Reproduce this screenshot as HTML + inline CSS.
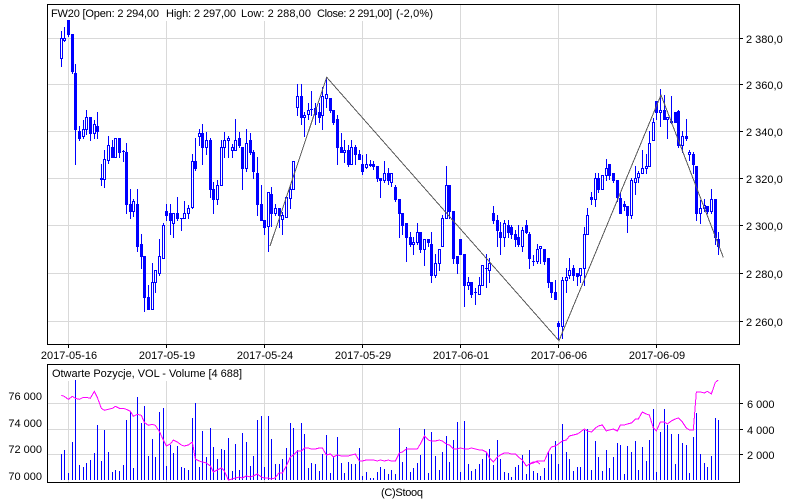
<!DOCTYPE html>
<html><head><meta charset="utf-8"><style>
html,body{margin:0;padding:0;background:#fff}
svg{display:block}
text{font-family:"Liberation Sans",Arial,sans-serif;font-size:11px;fill:#000;white-space:pre}
</style></head><body>
<svg width="800" height="500" viewBox="0 0 800 500" xmlns="http://www.w3.org/2000/svg">
<rect width="800" height="500" fill="#fff"/>
<g shape-rendering="crispEdges">
<path fill="none" stroke="#d9d9d9" d="M48 38.5H739M48 84.5H739M48 131.5H739M48 178.5H739M48 225.5H739M48 273.5H739M48 321.5H739M68.5 5V344M166.5 5V344M264.5 5V344M362.5 5V344M460.5 5V344M558.5 5V344M656.5 5V344"/>
<path fill="none" stroke="#d9d9d9" d="M48 403.5H739M48 429.5H739M48 454.5H739M68.5 365V482M166.5 365V482M264.5 365V482M362.5 365V482M460.5 365V482M558.5 365V482M656.5 365V482"/>
<rect x="48" y="5" width="388" height="16" fill="#fff"/>
<rect x="48" y="365" width="197" height="16" fill="#fff"/>
<path fill="none" stroke="#000" d="M47.5 4.5H739.5V344.5H47.5ZM47.5 364.5H739.5V482.5H47.5ZM68.5 345V348M166.5 345V348M264.5 345V348M362.5 345V348M460.5 345V348M558.5 345V348M656.5 345V348M740 38.5H743M740 84.5H743M740 131.5H743M740 178.5H743M740 225.5H743M740 273.5H743M740 321.5H743M740 403.5H743M740 429.5H743M740 454.5H743"/>
<!-- wicks -->
<path fill="none" stroke="#0000ff" d="M61.5 31V67M64.5 27V42M68.5 20V37M72.5 34V74M75.5 64V165M79.5 126V141M83.5 120V139M86.5 110V135M90.5 117V141M94.5 120V139M97.5 112V139M101.5 164V186M104.5 150V188M108.5 136V164M112.5 140V158M115.5 138V158M119.5 138V158M123.5 150V162M126.5 143V214M130.5 189V219M133.5 199V217M137.5 189V252M141.5 234V269M144.5 256V312M148.5 285V310M152.5 263V310M155.5 270V293M159.5 239V276M163.5 223V259M166.5 204V221M170.5 204V235M173.5 213V238M177.5 197V221M181.5 218V231M184.5 201V219M188.5 205V219M192.5 154V209M195.5 138V171M199.5 129V146M202.5 124V165M206.5 132V155M210.5 138V198M213.5 182V214M217.5 180V205M221.5 140V186M224.5 132V158M228.5 136V158M232.5 144V158M235.5 119V151M239.5 132V148M242.5 147V190M246.5 129V172M250.5 133V155M253.5 150V179M257.5 157V216M261.5 185V221M264.5 220V235M268.5 192V252M271.5 187V227M275.5 204V216M279.5 208V228M282.5 212V235M286.5 196V218M290.5 185V209M293.5 161V190M297.5 84V116M301.5 84V125M304.5 112V137M308.5 103V120M311.5 91V116M315.5 103V125M319.5 103V123M322.5 87V130M326.5 77V108M330.5 98V113M333.5 110V125M337.5 115V165M341.5 133V153M344.5 140V163M348.5 145V167M351.5 140V165M355.5 145V165M359.5 150V160M362.5 155V175M366.5 154V169M370.5 160V167M373.5 161V170M377.5 166V182M380.5 178V198M384.5 161V183M388.5 168V185M391.5 173V187M395.5 185V202M399.5 199V238M402.5 213V235M406.5 223V262M410.5 232V247M413.5 237V255M417.5 223V245M420.5 232V253M424.5 239V266M428.5 239V247M431.5 232V283M435.5 254V278M439.5 249V271M442.5 215V247M446.5 166V219M449.5 185V219M453.5 211V264M457.5 256V274M460.5 239V255M464.5 254V307M468.5 277V290M471.5 282V298M475.5 288V305M479.5 277V295M482.5 265V286M486.5 254V288M489.5 258V283M493.5 206V224M497.5 215V247M500.5 222V255M504.5 220V247M508.5 220V238M511.5 225V239M515.5 230V247M518.5 225V247M522.5 227V252M526.5 220V234M529.5 232V269M533.5 255V266M537.5 244V264M540.5 246V264M544.5 249V265M548.5 258V288M551.5 282V298M555.5 280V300M558.5 321V340M562.5 277V339M566.5 268V293M569.5 258V279M573.5 265V281M577.5 273V286M580.5 268V283M584.5 227V286M587.5 208V235M591.5 192V205M595.5 173V207M598.5 173V193M602.5 175V190M606.5 159V181M609.5 164V180M613.5 173V183M617.5 180V202M620.5 192V214M624.5 201V211M627.5 206V233M631.5 178V219M635.5 166V195M638.5 171V183M642.5 150V174M646.5 154V174M649.5 131V167M653.5 118V141M656.5 101V120M660.5 89V127M664.5 95V120M667.5 117V139M671.5 96V124M675.5 112V123M678.5 110V148M682.5 131V153M686.5 119V141M689.5 150V161M693.5 152V174M696.5 166V221M700.5 200V224M704.5 199V212M707.5 206V214M711.5 189V214M715.5 199V245M718.5 232V255"/>
<!-- filled -->
<path fill="#0000ff" d="M67 20h3V35h-3zM71 34h3V72h-3zM74 73h3V130h-3zM78 131h3V139h-3zM89 117h3V134h-3zM96 126h3V132h-3zM100 178h3V180h-3zM111 147h3V158h-3zM118 138h3V153h-3zM122 151h3V152h-3zM125 152h3V205h-3zM129 204h3V212h-3zM136 204h3V247h-3zM140 244h3V257h-3zM143 256h3V298h-3zM147 297h3V310h-3zM165 211h3V216h-3zM169 213h3V221h-3zM176 213h3V219h-3zM180 218h3V219h-3zM194 161h3V169h-3zM201 133h3V148h-3zM209 140h3V190h-3zM212 189h3V200h-3zM238 138h3V146h-3zM241 147h3V169h-3zM249 140h3V153h-3zM252 152h3V172h-3zM256 173h3V205h-3zM260 204h3V221h-3zM263 220h3V228h-3zM270 194h3V214h-3zM278 208h3V216h-3zM300 96h3V118h-3zM310 109h3V110h-3zM314 108h3V115h-3zM318 112h3V118h-3zM329 98h3V111h-3zM332 110h3V123h-3zM336 119h3V148h-3zM340 147h3V153h-3zM347 150h3V165h-3zM354 147h3V155h-3zM358 154h3V160h-3zM361 164h3V172h-3zM369 164h3V166h-3zM372 164h3V167h-3zM376 166h3V179h-3zM379 178h3V181h-3zM387 173h3V181h-3zM394 187h3V200h-3zM398 199h3V214h-3zM401 213h3V226h-3zM405 223h3V238h-3zM409 237h3V245h-3zM419 232h3V250h-3zM427 239h3V243h-3zM430 244h3V276h-3zM448 185h3V212h-3zM452 211h3V259h-3zM456 256h3V264h-3zM459 239h3V255h-3zM463 254h3V286h-3zM470 282h3V295h-3zM474 292h3V293h-3zM485 268h3V269h-3zM492 213h3V221h-3zM496 220h3V231h-3zM499 232h3V238h-3zM507 225h3V233h-3zM510 227h3V235h-3zM514 234h3V240h-3zM517 237h3V245h-3zM525 225h3V233h-3zM528 234h3V259h-3zM532 261h3V262h-3zM543 249h3V262h-3zM547 258h3V283h-3zM550 282h3V293h-3zM554 292h3V300h-3zM557 323h3V327h-3zM572 268h3V276h-3zM576 273h3V277h-3zM590 197h3V200h-3zM597 178h3V190h-3zM608 164h3V176h-3zM612 173h3V181h-3zM616 180h3V198h-3zM619 198h3V214h-3zM623 204h3V207h-3zM626 206h3V216h-3zM655 101h3V113h-3zM663 110h3V120h-3zM674 112h3V123h-3zM677 111h3V146h-3zM685 136h3V139h-3zM692 154h3V165h-3zM695 166h3V214h-3zM706 206h3V212h-3zM714 199h3V238h-3zM717 239h3V247h-3z"/>
<!-- hollow -->
<path fill="#fff" stroke="#0000ff" d="M60.5 38.5h2V58.5h-2zM63.5 38.5h2V40.5h-2zM82.5 129.5h2V136.5h-2zM85.5 117.5h2V129.5h-2zM93.5 124.5h2V133.5h-2zM103.5 159.5h2V179.5h-2zM107.5 145.5h2V160.5h-2zM114.5 138.5h2V157.5h-2zM132.5 201.5h2V211.5h-2zM151.5 282.5h2V309.5h-2zM154.5 270.5h2V282.5h-2zM158.5 256.5h2V273.5h-2zM162.5 225.5h2V258.5h-2zM172.5 213.5h2V223.5h-2zM183.5 213.5h2V218.5h-2zM187.5 208.5h2V213.5h-2zM191.5 161.5h2V207.5h-2zM198.5 133.5h2V136.5h-2zM205.5 140.5h2V147.5h-2zM216.5 185.5h2V199.5h-2zM220.5 147.5h2V185.5h-2zM223.5 140.5h2V147.5h-2zM227.5 138.5h2V140.5h-2zM231.5 147.5h2V150.5h-2zM234.5 140.5h2V150.5h-2zM245.5 143.5h2V168.5h-2zM267.5 192.5h2V226.5h-2zM274.5 208.5h2V213.5h-2zM281.5 215.5h2V219.5h-2zM285.5 197.5h2V217.5h-2zM289.5 189.5h2V198.5h-2zM292.5 161.5h2V189.5h-2zM296.5 96.5h2V107.5h-2zM303.5 115.5h2V117.5h-2zM307.5 110.5h2V114.5h-2zM321.5 96.5h2V115.5h-2zM325.5 94.5h2V98.5h-2zM343.5 150.5h2V152.5h-2zM350.5 147.5h2V164.5h-2zM365.5 164.5h2V167.5h-2zM383.5 173.5h2V180.5h-2zM390.5 173.5h2V182.5h-2zM412.5 242.5h2V244.5h-2zM416.5 232.5h2V242.5h-2zM423.5 239.5h2V249.5h-2zM434.5 263.5h2V275.5h-2zM438.5 249.5h2V263.5h-2zM441.5 218.5h2V246.5h-2zM445.5 185.5h2V218.5h-2zM467.5 282.5h2V285.5h-2zM478.5 285.5h2V294.5h-2zM481.5 265.5h2V285.5h-2zM488.5 263.5h2V270.5h-2zM503.5 223.5h2V237.5h-2zM521.5 230.5h2V246.5h-2zM536.5 249.5h2V261.5h-2zM539.5 246.5h2V248.5h-2zM561.5 280.5h2V326.5h-2zM565.5 277.5h2V280.5h-2zM568.5 270.5h2V275.5h-2zM579.5 268.5h2V275.5h-2zM583.5 234.5h2V268.5h-2zM586.5 215.5h2V234.5h-2zM594.5 178.5h2V199.5h-2zM601.5 175.5h2V189.5h-2zM605.5 168.5h2V175.5h-2zM630.5 180.5h2V215.5h-2zM634.5 178.5h2V182.5h-2zM637.5 173.5h2V177.5h-2zM641.5 168.5h2V173.5h-2zM645.5 166.5h2V168.5h-2zM648.5 143.5h2V166.5h-2zM652.5 122.5h2V140.5h-2zM659.5 110.5h2V112.5h-2zM666.5 117.5h2V119.5h-2zM670.5 121.5h2V122.5h-2zM681.5 136.5h2V145.5h-2zM688.5 152.5h2V154.5h-2zM699.5 208.5h2V213.5h-2zM703.5 205.5h2V208.5h-2zM710.5 199.5h2V211.5h-2z"/>
<!-- volume -->
<path fill="none" stroke="#0000ff" d="M61.5 454V480M64.5 450V480M68.5 473V480M72.5 442V480M75.5 380V480M79.5 465V480M83.5 467V480M86.5 463V480M90.5 460V480M94.5 453V480M97.5 425V480M101.5 461V480M104.5 430V480M108.5 452V480M112.5 472V480M115.5 470V480M119.5 471V480M123.5 465V480M126.5 420V480M130.5 412V480M133.5 468V480M137.5 397V480M141.5 423V480M144.5 406V480M148.5 456V480M152.5 439V480M155.5 457V480M159.5 412V480M163.5 408V480M166.5 466V480M170.5 445V480M173.5 453V480M177.5 446V480M181.5 467V480M184.5 468V480M188.5 470V480M192.5 418V480M195.5 403V480M199.5 467V480M202.5 431V480M206.5 457V480M210.5 428V480M213.5 447V480M217.5 459V480M221.5 449V480M224.5 450V480M228.5 438V480M232.5 471V480M235.5 444V480M239.5 470V480M242.5 433V480M246.5 442V480M250.5 466V480M253.5 456V480M257.5 420V480M261.5 416V480M264.5 467V480M268.5 416V480M271.5 439V480M275.5 464V480M279.5 464V480M282.5 459V480M286.5 448V480M290.5 423V480M293.5 428V480M297.5 450V480M301.5 423V480M304.5 434V480M308.5 468V480M311.5 463V480M315.5 464V480M319.5 471V480M322.5 454V480M326.5 435V480M330.5 473V480M333.5 457V480M337.5 437V480M341.5 463V480M344.5 473V480M348.5 462V480M351.5 464V480M355.5 464V480M359.5 448V480M362.5 476V480M366.5 472V480M370.5 478V480M373.5 478V480M377.5 472V480M380.5 467V480M384.5 469V480M388.5 474V480M391.5 470V480M395.5 474V480M399.5 428V480M402.5 462V480M406.5 447V480M410.5 472V480M413.5 468V480M417.5 463V480M420.5 455V480M424.5 429V480M428.5 473V480M431.5 432V480M435.5 456V480M439.5 470V480M442.5 452V480M446.5 436V480M449.5 462V480M453.5 440V480M457.5 422V480M460.5 472V480M464.5 421V480M468.5 464V480M471.5 471V480M475.5 469V480M479.5 464V480M482.5 459V480M486.5 452V480M489.5 449V480M493.5 465V480M497.5 440V480M500.5 459V480M504.5 472V480M508.5 473V480M511.5 477V480M515.5 467V480M518.5 465V480M522.5 455V480M526.5 474V480M529.5 450V480M533.5 471V480M537.5 473V480M540.5 476V480M544.5 468V480M548.5 451V480M551.5 454V480M555.5 441V480M558.5 464V480M562.5 424V480M566.5 452V480M569.5 459V480M573.5 471V480M577.5 467V480M580.5 467V480M584.5 430V480M587.5 429V480M591.5 470V480M595.5 441V480M598.5 457V480M602.5 471V480M606.5 450V480M609.5 468V480M613.5 457V480M617.5 443V480M620.5 445V480M624.5 474V480M627.5 446V480M631.5 452V480M635.5 441V480M638.5 470V480M642.5 447V480M646.5 461V480M649.5 440V480M653.5 409V480M656.5 472V480M660.5 432V480M664.5 409V480M667.5 425V480M671.5 434V480M675.5 464V480M678.5 434V480M682.5 443V480M686.5 445V480M689.5 473V480M693.5 437V480M696.5 413V480M700.5 454V480M704.5 463V480M707.5 467V480M711.5 456V480M715.5 418V480M718.5 420V480"/>
<!-- open interest -->
<g fill="none" stroke="#ff00ff" stroke-width="3">
<polyline transform="translate(0 340) scale(.33333)" points="184,166 193,169 205,178 217,169 226,175 238,178 250,172 259,172 271,175 283,154 292,172 304,205 313,211 325,208 337,205 346,199 358,205 370,205 379,208 391,214 400,229 412,223 424,226 433,247 445,256 457,253 466,256 478,274 490,300 499,318 511,312 520,300 532,306 544,315 553,318 565,315 577,306 586,357 598,363 607,366 619,369 631,378 640,396 652,390 664,384 673,393 685,420 697,417 706,414 718,411 727,414 739,408 751,411 760,408 772,402 784,411 793,414 805,414 813,417"/>
<polyline transform="translate(270 340) scale(.33333)" points="3,417 15,414 27,399 37,399 49,378 61,351 70,345 82,333 94,333 103,324 115,324 124,327 136,327 148,324 157,324 169,345 181,342 190,351 202,345 214,348 223,348 235,348 244,345 256,342 268,363 277,363 289,360 301,360 310,360 322,363 331,360 343,363 355,360 364,363 376,363 388,339 397,336 409,327 421,327 430,327 442,327 451,312 463,288 475,300 484,303 496,303 508,300 517,303 529,312 538,315 550,327 562,327 571,324 583,327 595,327 604,324 616,327 628,330 637,330 649,336 658,354 670,366 682,351 691,345 703,339 715,339 724,342 736,342 745,351 757,360 769,378 778,372 790,366 802,366 810,372"/>
<polyline transform="translate(530 340) scale(.33333)" points="0,372 10,369 22,363 31,363 43,363 55,336 64,321 76,318 85,312 97,303 109,300 118,288 130,285 142,282 151,276 163,267 172,273 184,276 196,264 205,258 217,255 229,273 238,270 250,267 262,273 271,255 283,255 292,252 304,249 316,237 325,237 337,216 349,222 358,225 370,264 379,273 391,246 403,246 412,252 424,243 436,237 445,234 457,246 469,264 478,270 490,270 499,156 511,156 523,159 532,154 544,162 556,127 565,120"/>
</g>
<!-- zigzag -->
<polyline fill="none" stroke="#5a5a5a" stroke-width="1" points="270,246 326.7,77.3 559,340.7 661,95 723.3,257.3"/>
</g>
<!-- text -->
<text x="51" y="17" textLength="108" lengthAdjust="spacing">FW20 [Open: 2 294,00</text>
<text x="166" y="17" textLength="70" lengthAdjust="spacing">High: 2 297,00</text>
<text x="241" y="17" textLength="70" lengthAdjust="spacing">Low: 2 288,00</text>
<text x="317" y="17" textLength="75" lengthAdjust="spacing">Close: 2 291,00]</text>
<text x="396" y="17" textLength="37" lengthAdjust="spacing">(-2,0%)</text>
<text x="746" y="43">2 380,0</text>
<text x="746" y="89">2 360,0</text>
<text x="746" y="136">2 340,0</text>
<text x="746" y="183">2 320,0</text>
<text x="746" y="230">2 300,0</text>
<text x="746" y="278">2 280,0</text>
<text x="746" y="326">2 260,0</text>
<g text-anchor="middle">
<text x="69" y="359">2017-05-16</text>
<text x="167" y="359">2017-05-19</text>
<text x="265" y="359">2017-05-24</text>
<text x="363" y="359">2017-05-29</text>
<text x="461" y="359">2017-06-01</text>
<text x="559" y="359">2017-06-06</text>
<text x="657" y="359">2017-06-09</text>
</g>
<text x="52" y="377" textLength="190" lengthAdjust="spacing">Otwarte Pozycje, VOL - Volume [4 688]</text>
<g text-anchor="end">
<text x="42" y="400">76 000</text>
<text x="42" y="427">74 000</text>
<text x="42" y="453">72 000</text>
<text x="42" y="480">70 000</text>
</g>
<text x="747" y="408">6 000</text>
<text x="747" y="434">4 000</text>
<text x="747" y="459">2 000</text>
<text x="381" y="496" textLength="42" lengthAdjust="spacing">(C)Stooq</text>
</svg>
</body></html>
